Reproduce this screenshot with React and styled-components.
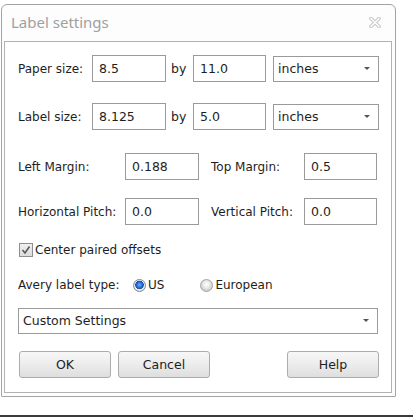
import React from 'react'
import styled, {createGlobalStyle} from 'styled-components'

const Global = createGlobalStyle`
  html, body {
    margin: 0;
    padding: 0;
    background: white;
  }
  body {
    font-family: "DejaVu Sans", Verdana, sans-serif;
    font-size: 12px;
    color: #1e1e1e;
  }
`

const Page = styled.div`
  width: 413px;
  height: 417px;
  display: flex;
  flex-direction: column;
  box-sizing: border-box;
  padding: 4px 0 0 1px;
  overflow: hidden;
`

const Window = styled.div`
  width: 395px;
  height: 393px;
  flex: 0 0 auto;
  box-sizing: border-box;
  border: 1px solid #a3a3a3;
  border-radius: 6px 6px 1px 1px;
  background: #fdfdfd;
  display: flex;
  flex-direction: column;
`

const TitleBar = styled.div`
  height: 34px;
  display: flex;
  align-items: center;
  justify-content: space-between;
  padding: 0 14px 2px 9px;
  & h1 {
    margin: 0;
    font-family: "Noto Sans", "Open Sans", sans-serif;
    font-size: 15px;
    font-weight: 400;
    color: #a0a0a0;
  }
`

const Panel = styled.div`
  flex: 1 1 auto;
  margin: 0 3px 3px 2px;
  border: 1px solid #b2b2b2;
  background: white;
  padding: 13px 12px 0 13px;
  display: flex;
  flex-direction: column;
`

const Row = styled.div`
  display: flex;
  align-items: center;
  height: ${p => p.$h || 27}px;
  margin-top: ${p => p.$mt || 0}px;
  flex: 0 0 auto;
`

const Label = styled.span`
  width: ${p => p.$w}px;
  margin-left: ${p => p.$ml || 0}px;
  flex: 0 0 auto;
  white-space: nowrap;
`

const Input = styled.div`
  width: ${p => p.$w || 74}px;
  height: 27px;
  box-sizing: border-box;
  border: 1px solid #9a9a9a;
  padding: 0 0 1px 6px;
  display: flex;
  align-items: center;
  flex: 0 0 auto;
  font-size: 12.5px;
`

const By = styled.span`
  width: 27px;
  padding-left: 5px;
  box-sizing: border-box;
  font-size: 12.5px;
`

const Select = styled.div`
  width: ${p => p.$w}px;
  margin-left: ${p => p.$ml || 0}px;
  height: ${p => p.$h || 26}px;
  box-sizing: border-box;
  border: 1px solid #9a9a9a;
  padding: 0 8px 1px 4px;
  display: flex;
  align-items: center;
  justify-content: space-between;
  flex: 0 0 auto;
  font-size: 12.5px;
`

const Arrow = styled.span`
  width: 0;
  height: 0;
  border-left: 3px solid transparent;
  border-right: 3px solid transparent;
  border-top: 3px solid #555;
`

const Check = styled.span`
  width: 14px;
  height: 14px;
  margin-left: 1px;
  box-sizing: border-box;
  border: 1px solid #8e8e8e;
  background: linear-gradient(#f0f0f0, #dcdcdc);
  display: flex;
  align-items: center;
  justify-content: center;
  margin-right: 2px;
`

const Radio = styled.span`
  width: 13px;
  height: 13px;
  box-sizing: border-box;
  border-radius: 50%;
  border: 1px solid ${p => (p.$on ? '#7d8a99' : '#a3a3a3')};
  background: ${p => (p.$on
    ? 'radial-gradient(circle at 50% 45%, #6fb0ff 0, #1f66d1 3px, #1852a8 4px, #f2f2f2 4.6px, #d8d8d8 6px)'
    : 'radial-gradient(circle at 50% 40%, #ffffff 0, #ececec 3px, #cfcfcf 6px)')};
  margin-left: ${p => p.$ml || 0}px;
  margin-right: 2px;
  flex: 0 0 auto;
`

const Button = styled.button`
  width: 92px;
  height: 27px;
  margin-left: ${p => p.$ml || '0'};
  border: 1px solid #acacac;
  border-radius: 3px;
  background: linear-gradient(#f7f7f7 0%, #ececec 50%, #dedede 100%);
  font-family: "DejaVu Sans", Verdana, sans-serif;
  font-size: 12.5px;
  color: #1e1e1e;
  padding: 0 0 1px;
`

const BottomLine = styled.div`
  margin-top: auto;
  flex: 0 0 2px;
  height: 2px;
  margin-left: -1px;
  background: #3a3a3a;
`

const CloseIcon = () => (
  <svg width="12" height="11" viewBox="0 0 12 11">
    <g strokeLinecap="square">
      <path d="M2 1.5 L10 9.5 M10 1.5 L2 9.5" stroke="#c9c9c9" strokeWidth="3.6" />
      <path d="M2 1.5 L10 9.5 M10 1.5 L2 9.5" stroke="#ffffff" strokeWidth="1.4" />
    </g>
  </svg>
)

export default function App() {
  return (
    <Page>
      <Global />
      <Window>
        <TitleBar>
          <h1>Label settings</h1>
          <CloseIcon />
        </TitleBar>
        <Panel>
          <Row>
            <Label $w={74}>Paper size:</Label>
            <Input $w={74}>8.5</Input>
            <By>by</By>
            <Input $w={73}>11.0</Input>
            <Select $w={106} $ml={7}>inches<Arrow /></Select>
          </Row>
          <Row $mt={21}>
            <Label $w={74}>Label size:</Label>
            <Input $w={74}>8.125</Input>
            <By>by</By>
            <Input $w={73}>5.0</Input>
            <Select $w={106} $ml={7}>inches<Arrow /></Select>
          </Row>
          <Row $mt={23}>
            <Label $w={107}>Left Margin:</Label>
            <Input $w={74}>0.188</Input>
            <Label $w={93} $ml={12}>Top Margin:</Label>
            <Input $w={73}>0.5</Input>
          </Row>
          <Row $mt={18}>
            <Label $w={107}>Horizontal Pitch:</Label>
            <Input $w={74}>0.0</Input>
            <Label $w={93} $ml={12}>Vertical Pitch:</Label>
            <Input $w={73}>0.0</Input>
          </Row>
          <Row $mt={16} $h={18}>
            <Check>
              <svg width="10" height="10" viewBox="0 0 10 10">
                <path d="M1.5 5 L4 8 L8.5 1.5" fill="none" stroke="#5a5a5a" strokeWidth="1.6" />
              </svg>
            </Check>
            <span>Center paired offsets</span>
          </Row>
          <Row $mt={17} $h={18}>
            <Label $w={115}>Avery label type:</Label>
            <Radio $on />
            <span>US</span>
            <Radio $ml={36} />
            <span>European</span>
          </Row>
          <Row $mt={14} $h={26}>
            <Select $w={360} $h={26}>Custom Settings<Arrow /></Select>
          </Row>
          <Row $mt={17}>
            <Button $ml="1px">OK</Button>
            <Button $ml="7px">Cancel</Button>
            <Button $ml="auto">Help</Button>
          </Row>
        </Panel>
      </Window>
      <BottomLine />
    </Page>
  )
}
